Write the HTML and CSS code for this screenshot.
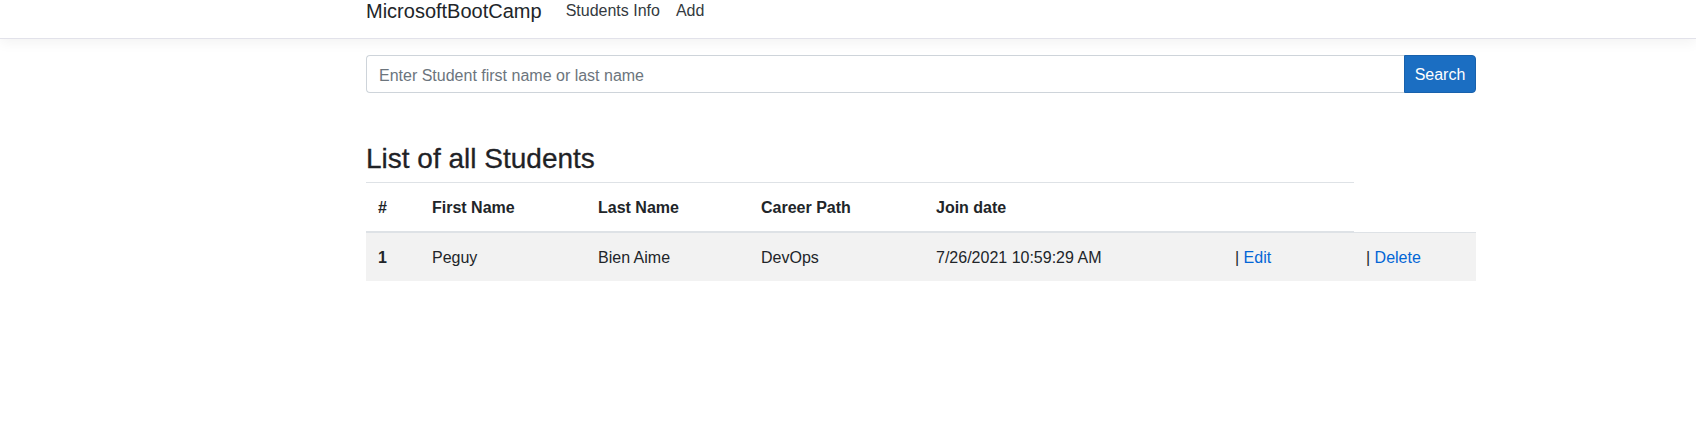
FILE: index.html
```html
<!DOCTYPE html>
<html lang="en">
<head>
<meta charset="utf-8">
<title>Students - MicrosoftBootCamp</title>
<link rel="stylesheet" href="styles.css">
</head>
<body>
<header class="navbar">
  <div class="container nav-inner">
    <a class="brand" href="#">MicrosoftBootCamp</a>
    <nav class="nav-links">
      <a class="nav-link" href="#">Students Info</a>
      <a class="nav-link" href="#">Add</a>
    </nav>
  </div>
</header>
<main class="container main">
  <form class="search-row">
    <input class="search-input" type="text" placeholder="Enter Student first name or last name">
    <button class="search-btn" type="button">Search</button>
  </form>
  <h3 class="title">List of all Students</h3>
  <table class="table">
    <colgroup>
      <col class="c-num"><col class="c-first"><col class="c-last"><col class="c-path"><col class="c-date"><col class="c-edit"><col class="c-del">
    </colgroup>
    <thead>
      <tr>
        <th>#</th>
        <th>First Name</th>
        <th>Last Name</th>
        <th>Career Path</th>
        <th>Join date</th>
        <th></th>
      </tr>
    </thead>
    <tbody>
      <tr class="striped">
        <th>1</th>
        <td>Peguy</td>
        <td>Bien Aime</td>
        <td>DevOps</td>
        <td>7/26/2021 10:59:29 AM</td>
        <td><span class="pipe">|</span> <a href="#" class="link">Edit</a></td>
        <td><span class="pipe">|</span> <a href="#" class="link">Delete</a></td>
      </tr>
    </tbody>
  </table>
</main>
</body>
</html>
```
FILE: styles.css
```css
* { box-sizing: border-box; }
html, body { margin: 0; padding: 0; background: #fff; }
body {
  font-family: "Liberation Sans", Arial, sans-serif;
  font-size: 16px;
  line-height: 1.5;
  color: #212529;
}
a { text-decoration: none; }

.container {
  width: 1110px;
  margin-left: 366px;
}

/* navbar */
.navbar {
  height: 39px;
  border-bottom: 1px solid #e2e2ea;
  box-shadow: 0 4px 12px rgba(0, 0, 0, 0.05);
  background: #fff;
}
.nav-inner {
  display: flex;
  align-items: flex-start;
  height: 38px;
}
.brand {
  font-size: 20px;
  line-height: 22px;
  color: #212529;
  margin-right: 16px;
}
.nav-links {
  display: flex;
}
.nav-link {
  font-size: 16px;
  line-height: 18px;
  padding: 2px 8px 0;
  color: #343a40;
}

/* search */
.main { padding-top: 16px; }
.search-row {
  display: flex;
  height: 38px;
  margin: 0;
}
.search-input {
  flex: 1;
  height: 38px;
  border: 1px solid #ced4da;
  border-right: none;
  border-radius: 4px 0 0 4px;
  padding: 8px 12px 4px;
  font-family: inherit;
  font-size: 16px;
  color: #495057;
  outline: none;
}
.search-input::placeholder { color: #6c757d; }
.search-btn {
  width: 72px;
  height: 38px;
  background: #1b6ec2;
  border: 1px solid #1861ac;
  border-radius: 0 4px 4px 0;
  color: #fff;
  font-family: inherit;
  font-size: 16px;
  padding: 2px 0 0;
}

/* heading */
.title {
  font-size: 28px;
  font-weight: 500;
  line-height: 34px;
  margin: 49px 0 6px;
  color: #1f2226;
  -webkit-text-stroke: 0.3px #1f2226;
}

/* table */
.table {
  width: 1110px;
  table-layout: fixed;
  border-collapse: collapse;
}
.c-num { width: 54px; }
.c-first { width: 166px; }
.c-last { width: 163px; }
.c-path { width: 175px; }
.c-date { width: 299px; }
.c-edit { width: 131px; }
.c-del { width: 122px; }

.table th, .table td {
  padding: 13px 12px 11px;
  text-align: left;
  vertical-align: top;
  border-top: 1px solid #dee2e6;
  line-height: 24px;
}
.table th { font-weight: 700; }
.table thead th {
  border-bottom: 2px solid #dee2e6;
}
.striped { background: #f2f2f2; }
.pipe { color: #212529; }
.link { color: #0366d6; }
```
